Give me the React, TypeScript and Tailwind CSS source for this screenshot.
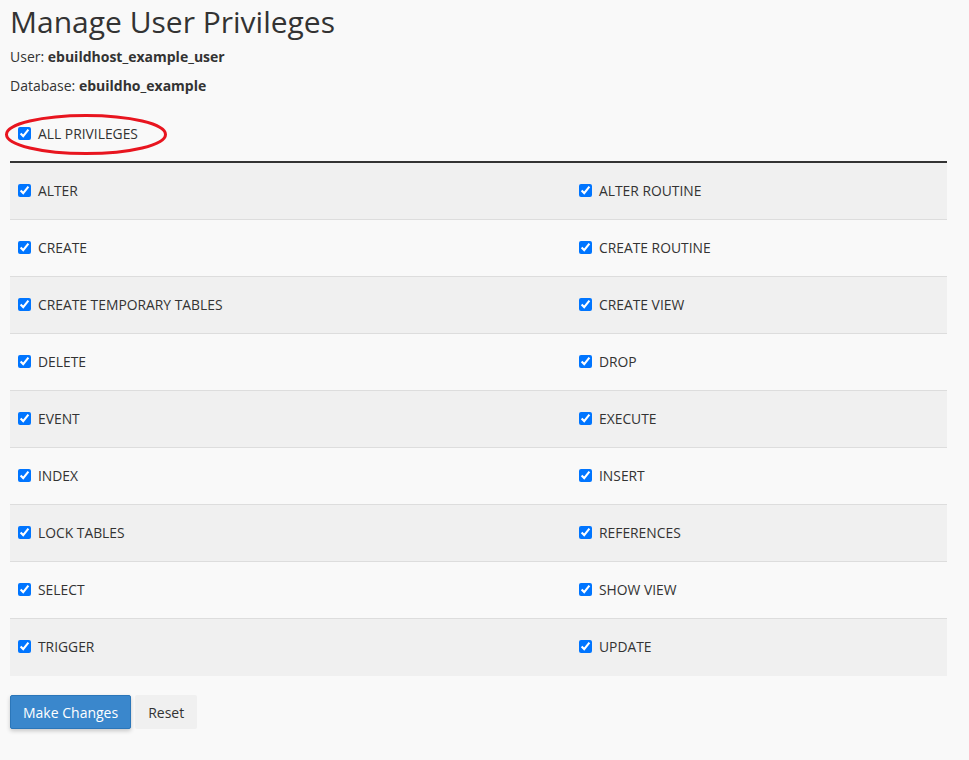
import React from "react";

const rows: [string, string][] = [
  ["ALTER", "ALTER ROUTINE"],
  ["CREATE", "CREATE ROUTINE"],
  ["CREATE TEMPORARY TABLES", "CREATE VIEW"],
  ["DELETE", "DROP"],
  ["EVENT", "EXECUTE"],
  ["INDEX", "INSERT"],
  ["LOCK TABLES", "REFERENCES"],
  ["SELECT", "SHOW VIEW"],
  ["TRIGGER", "UPDATE"],
];

function Check({ label }: { label: string }) {
  return (
    <label className="flex items-center gap-[7px] text-[13.85px] text-[#333]">
      <input type="checkbox" defaultChecked className="m-0 h-[13px] w-[13px] accent-[#0075ff]" />
      <span>{label}</span>
    </label>
  );
}

export default function App() {
  return (
    <div
      className="min-h-[760px] w-[969px] bg-[#f9f9f9] px-[10px] text-[#333]"
      style={{ fontFamily: '"Open Sans", "Liberation Sans", sans-serif' }}
    >
      <h1 className="pt-[2px] text-[30px] leading-[40px] font-normal text-[#333]">Manage User Privileges</h1>
      <div className="mt-[5px] text-[14px] leading-[20px]">
        User: <b className="font-bold">ebuildhost_example_user</b>
      </div>
      <div className="mt-[9px] text-[14px] leading-[20px]">
        Database: <b className="font-bold">ebuildho_example</b>
      </div>
      <div className="relative mt-[17px] flex h-[40px] items-center pl-[8px] pt-[2px]">
        <Check label="ALL PRIVILEGES" />
        <svg
          className="pointer-events-none absolute left-[-10px] top-0"
          width="180"
          height="44"
          viewBox="0 0 180 44"
        >
          <ellipse cx="86" cy="21.5" rx="79.5" ry="19" fill="none" stroke="#e8151f" strokeWidth="3" />
        </svg>
      </div>
      <div className="mt-[8px] w-[937px] border-t-2 border-[#333]">
        {rows.map(([a, b], i) => (
          <div
            key={a}
            className={`flex h-[57px] items-center border-b ${i % 2 === 0 ? "bg-[#f0f0f0]" : "bg-[#f9f9f9]"} ${
              i < rows.length - 1 ? "border-[#dddddd]" : "border-[#f0f0f0]"
            }`}
          >
            <div className="w-[561px] pl-[8px]">
              <Check label={a} />
            </div>
            <div className="flex-1 pl-[8px]">
              <Check label={b} />
            </div>
          </div>
        ))}
      </div>
      <div className="mt-[19px] flex gap-[4px]">
        <button className="h-[34px] rounded-[2px] border border-[#2b76b9] bg-[#3a87cc] px-[12px] text-[14px] text-white shadow-[0_2px_4px_rgba(0,0,0,0.2)]">
          Make Changes
        </button>
        <button className="h-[34px] rounded-[2px] bg-[#f0f0f0] px-[13px] text-[14px] text-[#333]">Reset</button>
      </div>
    </div>
  );
}
